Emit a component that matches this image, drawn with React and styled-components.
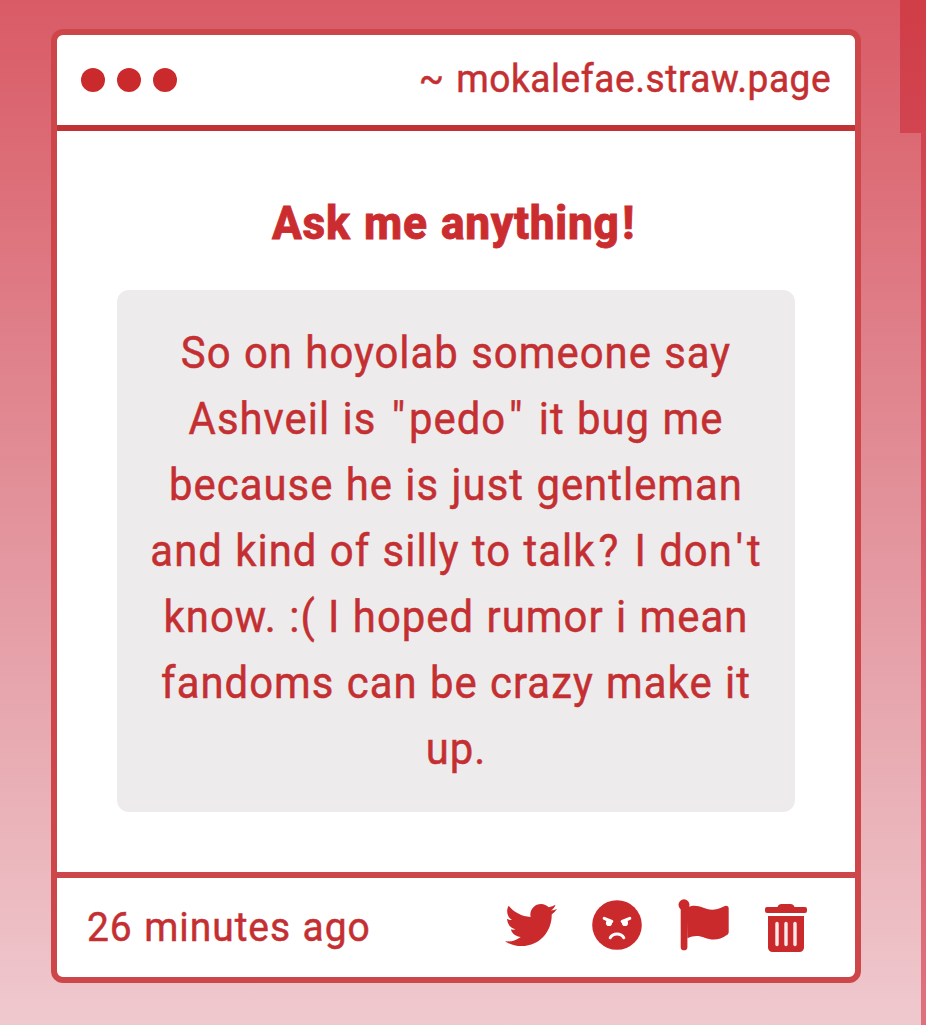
import React from 'react'
import styled, { createGlobalStyle } from 'styled-components'
import { FaTwitter } from 'react-icons/fa'

const GlobalStyle = createGlobalStyle`
  * {
    box-sizing: border-box;
  }

  body {
    margin: 0;
    overflow: hidden;
    font-family: Roboto, 'Liberation Sans', sans-serif;
    color: #c42f32;
  }
`

const Page = styled.main`
  position: relative;
  height: 1025px;
  padding: 29px 0 0 51px;
  background: linear-gradient(#d95b66 0%, #e29099 48%, #efc9ce 100%);
`

const ScrollTrack = styled.div`
  position: absolute;
  top: 0;
  right: 0;
  display: flex;
  flex-direction: column;
  align-items: flex-end;
  height: 100%;
`

const ScrollThumb = styled.div`
  width: 26px;
  height: 133px;
  background: linear-gradient(#d03e47, #d14450);
`

const ScrollEdge = styled.div`
  flex: 1;
  width: 5px;
  background: linear-gradient(#d14450, #df717e);
`

const Card = styled.article`
  display: flex;
  flex-direction: column;
  width: 810px;
  height: 954px;
  border: 6px solid #cd474a;
  border-radius: 12px;
  background: #fff;
`

const TitleBar = styled.header`
  display: flex;
  align-items: center;
  justify-content: space-between;
  height: 96px;
  padding: 0 24px;
  border-bottom: 6px solid #c13234;
`

const Dots = styled.div`
  display: flex;
  gap: 12px;
`

const Dot = styled.span`
  width: 24px;
  height: 24px;
  border-radius: 50%;
  background: #cb2a2d;
`

/* slightly condensed Roboto */
const Condensed = styled.span`
  display: block;
  transform: scaleX(0.95);
  transform-origin: ${props => props.$origin || 'center'};
  white-space: nowrap;
  -webkit-text-stroke: 0.5px currentColor;
`

const Address = styled(Condensed)`
  padding-bottom: 2px;
  font-size: 39px;
  letter-spacing: 0.6px;
  line-height: 46px;
  word-spacing: 2px;
`

const Content = styled.section`
  flex: 1;
  padding: 65px 60px 0;
  text-align: center;
`

const Heading = styled.h1`
  margin: 0 0 40px;
  color: #cb2c2f;
  font-size: 46px;
  font-weight: 800;
  letter-spacing: 0.7px;
  line-height: 54px;
  word-spacing: 2px;
  transform: translateX(-1px) scaleX(0.96);
  -webkit-text-stroke: 0.8px currentColor;
`

const Question = styled.div`
  height: 522px;
  padding: 30px 0;
  border-radius: 12px;
  background: #edebec;
`

const Line = styled(Condensed)`
  font-size: 44px;
  letter-spacing: 1.1px;
  line-height: 66px;
  word-spacing: 1px;
`

const Mark = styled.span`
  margin: 0 3px;
`

const Footer = styled.footer`
  display: flex;
  align-items: center;
  justify-content: space-between;
  height: 105px;
  padding: 0 40px 6px 30px;
  border-top: 6px solid #cd474a;
`

const Time = styled(Condensed)`
  padding-top: 4px;
  font-size: 41px;
  letter-spacing: 1px;
  word-spacing: 1px;
`

const Actions = styled.div`
  display: flex;
  align-items: center;
  gap: 34px;
`

const Action = styled.button`
  display: flex;
  padding: 0;
  border: 0;
  background: none;
  color: #cb2a2d;

  svg {
    display: block;
    width: 52px;
    height: 52px;
    overflow: visible;
  }
`

const lines = [
  'So on hoyolab someone say',
  'Ashveil is "pedo" it bug me',
  'because he is just gentleman',
  "and kind of silly to talk? I don't",
  'know. :( I hoped rumor i mean',
  'fandoms can be crazy make it',
  'up.'
]

// quotes and question marks get a little extra room
const spaceMarks = text =>
  text
    .split(/(["'?!])/)
    .map((part, i) => (i % 2 ? <Mark key={i}>{part}</Mark> : part))

const AngryIcon = () => (
  <svg viewBox="0 0 52 52" fill="none">
    <circle cx="26" cy="26" r="24.8" fill="currentColor" />
    <g stroke="#fff" strokeWidth="3" strokeLinecap="round">
      <path d="M13.2 19.3l7.6 3.2M38.8 19.3l-7.6 3.2" />
      <path d="M19.2 38.7c2.8-5 10.8-5 13.6 0" />
    </g>
    <circle cx="18" cy="24" r="3.1" fill="#fff" />
    <circle cx="34" cy="24" r="3.1" fill="#fff" />
  </svg>
)

const FlagIcon = () => (
  <svg viewBox="-0.7 0 52 52" fill="currentColor">
    <circle cx="6.3" cy="5.8" r="5.5" />
    <path d="M3 6h6.7v42a3.35 3.35 0 0 1-6.7 0z" />
    <path d="M9 8.7C15 5.7 20 6.7 25 8.5c6 2.5 12 3.5 21-1 3-1.5 5-.3 5 2v23.2c0 1.5-.5 2.5-1.8 3.4C42 41.5 34 41.5 27 38.8c-6-2.3-11-2.3-17.3.4z" />
  </svg>
)

const TrashIcon = () => (
  <svg viewBox="0 0 52 52" fill="currentColor">
    <path d="M4 8h10.5c.6-2 2-3 4-3h9c2 0 3.4 1 4 3H42a2 2 0 0 1 2 2v2a2 2 0 0 1-2 2H4a2 2 0 0 1-2-2v-2a2 2 0 0 1 2-2zM5 17h36v31.5a4.5 4.5 0 0 1-4.5 4.5h-27A4.5 4.5 0 0 1 5 48.5z" />
    <path
      d="M14 24.5v21M23 24.5v21M32 24.5v21"
      stroke="#fbe9ea"
      strokeWidth="3.4"
      strokeLinecap="round"
    />
  </svg>
)

export default function App() {
  return (
    <Page>
      <GlobalStyle />
      <Card>
        <TitleBar>
          <Dots>
            <Dot />
            <Dot />
            <Dot />
          </Dots>
          <Address $origin="right">~ mokalefae.straw.page</Address>
        </TitleBar>
        <Content>
          <Heading>{spaceMarks('Ask me anything!')}</Heading>
          <Question>
            {lines.map((line, i) => (
              <Line key={i}>{spaceMarks(line)}</Line>
            ))}
          </Question>
        </Content>
        <Footer>
          <Time $origin="left">26 minutes ago</Time>
          <Actions>
            <Action aria-label="Share">
              <FaTwitter />
            </Action>
            <Action aria-label="Block">
              <AngryIcon />
            </Action>
            <Action aria-label="Report">
              <FlagIcon />
            </Action>
            <Action aria-label="Delete">
              <TrashIcon />
            </Action>
          </Actions>
        </Footer>
      </Card>
      <ScrollTrack>
        <ScrollThumb />
        <ScrollEdge />
      </ScrollTrack>
    </Page>
  )
}
